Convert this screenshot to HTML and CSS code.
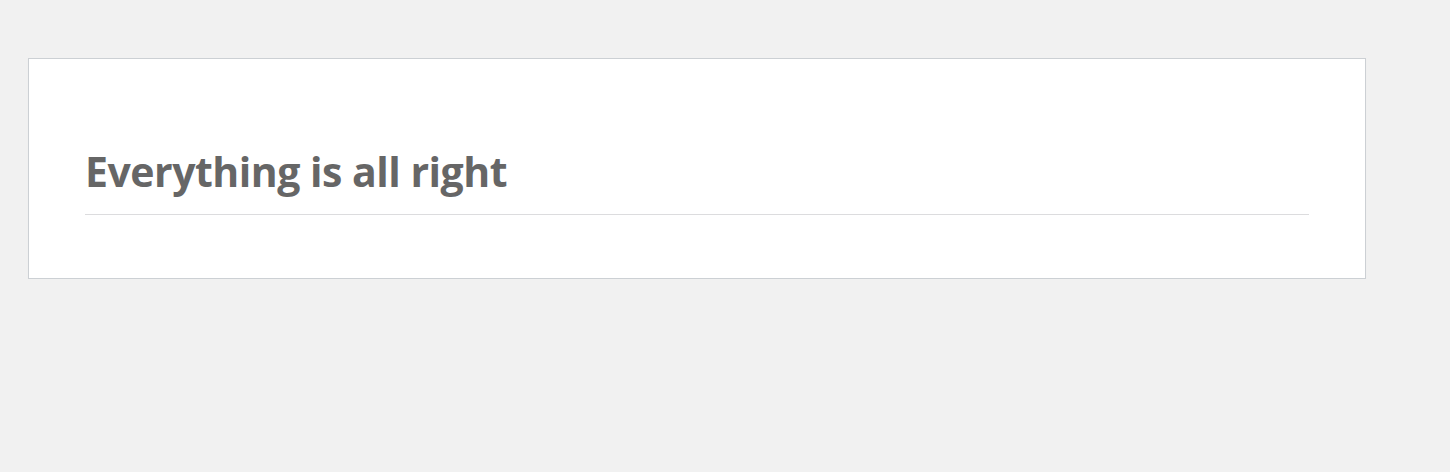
FILE: index.html
```html
<!DOCTYPE html>
<html lang="en">

<head>
    <meta charset="UTF-8">
    <meta name="viewport" content="width=device-width, initial-scale=1.0">
    <title>Status</title>

    <!-- CSS styling -->
    <link rel="stylesheet" href="styles.css">
</head>

<body>
    <!-- Status panel -->
    <div class="wrap">
        <div class="card">
            <h1 class="card-title">Everything is all right</h1>
            <hr class="divider">
        </div>
    </div>
</body>

</html>
```
FILE: styles.css
```css
/* General body styles */
body {
    margin: 0;
    padding: 0;
    background-color: #f1f1f1;
    font-family: "Open Sans", "Noto Sans", sans-serif;
}

/* Page wrapper */
.wrap {
    padding: 58px 84px 0 28px;
}

/* Card styling */
.card {
    background-color: #fff;
    border: 1px solid #ccd0d4;
    box-shadow: 0 1px 1px rgba(0, 0, 0, 0.04);
    padding: 84px 56px 63px 56px;
}

/* Title styling */
.card-title {
    margin: 0;
    color: #666;
    font-size: 41px;
    font-weight: 700;
    line-height: 56px;
    letter-spacing: -0.5px;
}

/* Divider */
.divider {
    margin: 15px 0 0 0;
    border: 0;
    border-top: 1px solid #dcdcde;
}
```
